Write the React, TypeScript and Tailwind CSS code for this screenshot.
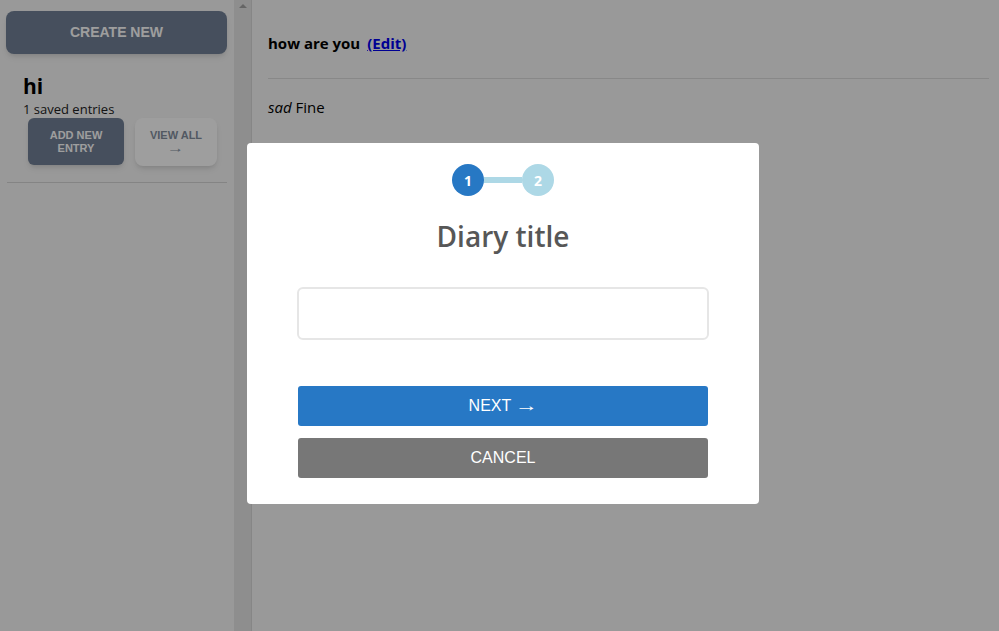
import { useState } from 'react';

const sans = { fontFamily: '"Open Sans", "Noto Sans", sans-serif' };

// stretched arrow, like the long thin one in the screenshot
function Arrow({ className = '' }: { className?: string }) {
  return <span className={`inline-block origin-left scale-x-[1.45] font-['Liberation_Sans',sans-serif] ${className}`}>→</span>;
}

function Sidebar() {
  return (
    <aside className="flex h-full shrink-0 border-r border-[#d8d8d8]">
      <div className="w-[234px] px-[6px] pt-[11px]">
        <button className="h-[43px] w-[221px] rounded-lg bg-[#718096] text-[14px] font-bold text-white shadow-md font-['Liberation_Sans',Arial,sans-serif]">
          CREATE NEW
        </button>

        <div className="px-[17px] pt-[18px]" style={sans}>
          <h2 className="text-[21px] font-bold leading-[28px] text-black">hi</h2>
          <p className="text-[13px] leading-[18px] text-[#222]">1 saved entries</p>
        </div>

        <div className="ml-[22px] flex gap-[11px] font-['Liberation_Sans',Arial,sans-serif]">
          <button className="h-[47px] w-[96px] rounded-md bg-[#718096] text-[11px] font-bold leading-[13px] text-white shadow-md">
            ADD NEW
            <br />
            ENTRY
          </button>
          <button className="h-[48px] w-[82px] rounded-lg bg-white text-[11px] font-bold leading-[13px] text-[#848f9e] shadow-md">
            VIEW ALL
            <br />
            <Arrow className="-translate-x-[3px] font-normal text-[12px]" />
          </button>
        </div>

        <hr className="mt-[16px] ml-[1px] w-[220px] border-[#d6d6d6]" />
      </div>

      {/* scrollbar */}
      <div className="flex w-[17px] justify-center bg-[#e6e6e6] pt-[4px]">
        <div className="h-0 w-0 border-x-[4px] border-b-[4px] border-x-transparent border-b-[#a3a3a3]" />
      </div>
    </aside>
  );
}

function Stepper() {
  return (
    <div className="flex items-center justify-center">
      <div className="flex h-8 w-8 items-center justify-center rounded-full bg-[#2778c4] text-[14px] font-bold text-white">
        1
      </div>
      <div className="h-[6px] w-[38px] bg-[#add8e6]" />
      <div className="flex h-8 w-8 items-center justify-center rounded-full bg-[#add8e6] text-[14px] font-bold text-white">
        2
      </div>
    </div>
  );
}

function DiaryModal() {
  const [title, setTitle] = useState('');

  return (
    <div className="fixed inset-0 flex justify-center bg-black/[0.38] pt-[143px] pl-[7px]">
      <div className="h-[361px] w-[512px] rounded bg-white px-[50px] pt-[21px]" style={sans}>
        <Stepper />
        <h1 className="mt-[22px] text-center text-[28px] font-semibold leading-[36px] text-[#575757]">
          Diary title
        </h1>
        <input
          value={title}
          onChange={(e) => setTitle(e.target.value)}
          className="mt-[33px] block h-[53px] w-full rounded-md border-2 border-[#e6e6e6] px-3 text-[16px] outline-none"
        />
        <div className="mx-px mt-[46px] flex flex-col gap-[12px] font-['Liberation_Sans',Arial,sans-serif] text-[16px] text-white">
          <button className="h-10 rounded-[3px] bg-[#2778c5] pr-[6px]">
            NEXT <Arrow />
          </button>
          <button className="h-10 rounded-[3px] bg-[#777]">CANCEL</button>
        </div>
      </div>
    </div>
  );
}

export default function App() {
  return (
    <div className="relative flex h-screen w-full overflow-hidden bg-[#f7f7f7]">
      <Sidebar />

      <main className="flex-1 pl-4 pr-[10px]" style={sans}>
        <div className="flex h-[79px] items-center border-b border-[#dcdcdc] pt-[9px]">
          <span className="text-[15px] font-bold text-black">how are you</span>
          <a href="#" className="ml-[7px] text-[15px] font-bold text-[#0000ee] underline">
            (Edit)
          </a>
        </div>
        <p className="mt-[17px] text-[15px] text-black">
          <em>sad</em> Fine
        </p>
      </main>

      <DiaryModal />
    </div>
  );
}
